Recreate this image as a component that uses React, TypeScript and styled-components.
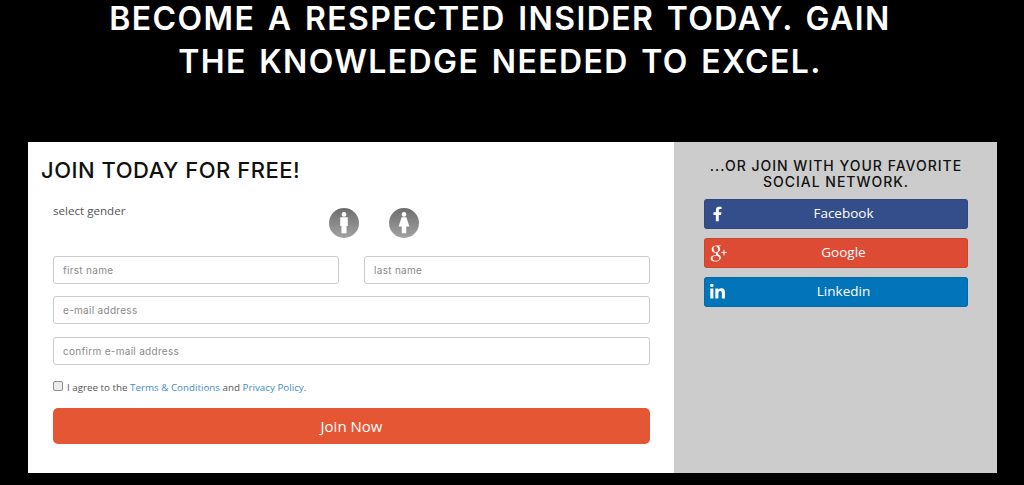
import styled, { createGlobalStyle } from 'styled-components';
import { FaFacebookF, FaLinkedinIn } from 'react-icons/fa';
import { TiSocialGooglePlus } from 'react-icons/ti';

const GlobalStyle = createGlobalStyle`
  html, body {
    margin: 0;
    height: 100%;
    background: #000;
    overflow: hidden;
  }
  * {
    box-sizing: border-box;
  }
`;

const Page = styled.div`
  width: 1024px;
  height: 485px;
  background: #000;
  display: flex;
  flex-direction: column;
`;

const Headline = styled.h1`
  width: 1000px;
  height: 145px;
  margin: -3px 0 0;
  text-align: center;
  color: #fff;
  font-family: Inter, sans-serif;
  font-size: 32px;
  font-weight: 600;
  line-height: 43px;
  letter-spacing: 1.4px;
  word-spacing: 3px;
  text-transform: uppercase;
`;

const Panel = styled.div`
  width: 969px;
  height: 331px;
  margin-left: 28px;
  display: flex;
`;

const FormSide = styled.div`
  width: 646px;
  background: #fff;
  padding: 15px 24px 0 13px;
`;

const FormTitle = styled.h2`
  margin: 0;
  color: #111;
  font-family: Inter, sans-serif;
  font-size: 22px;
  font-weight: 500;
  line-height: 27px;
  letter-spacing: 0.5px;
  text-transform: uppercase;
`;

const FormBody = styled.div`
  padding-left: 12px;
`;

const GenderRow = styled.div`
  display: flex;
  height: 72px;
  padding-top: 19px;
`;

const GenderLabel = styled.div`
  width: 276px;
  color: #555;
  font-family: "Open Sans", sans-serif;
  font-size: 11.6px;
  line-height: 16px;
`;

const GenderIcons = styled.div`
  display: flex;
  gap: 30px;
  padding-top: 5px;
`;

const GenderBadge = styled.svg`
  width: 30px;
  height: 30px;
  display: block;
`;

const NameRow = styled.div`
  display: flex;
  gap: 25px;
`;

const Field = styled.input`
  display: block;
  flex: 1;
  width: 100%;
  min-width: 0;
  height: 28px;
  border: 1px solid #ccc;
  border-radius: 3px;
  padding: 0 9px;
  background: #fff;
  font-family: Inter, sans-serif;
  font-size: 10px;
  letter-spacing: 0.3px;
  outline: none;

  &::placeholder {
    color: #8a8a8a;
    opacity: 1;
  }
`;

const EmailField = styled(Field)`
  margin-top: 12px;
`;

const ConfirmField = styled(Field)`
  margin-top: 13px;
`;

const AgreeRow = styled.label`
  display: flex;
  align-items: center;
  height: 17px;
  margin-top: 14px;
  color: #555;
  font-family: "Open Sans", sans-serif;
  font-size: 9.8px;
`;

const AgreeBox = styled.input`
  appearance: none;
  width: 10px;
  height: 10px;
  margin: 0 4px 4px 0;
  border: 1px solid #8f8f8f;
  border-radius: 2px;
  background: #ececec;
`;

const AgreeLink = styled.a`
  color: #428bca;
  text-decoration: none;
`;

const JoinButton = styled.button`
  display: block;
  width: 100%;
  height: 36px;
  margin-top: 12px;
  border: 0;
  border-radius: 5px;
  background: #e55635;
  color: #fff;
  font-family: "Open Sans", sans-serif;
  font-size: 15px;
`;

const SocialSide = styled.div`
  flex: 1;
  background: #ccc;
  padding: 16px 29px 0 30px;
`;

const SocialTitle = styled.h3`
  margin: 0 0 9px;
  color: #111;
  font-family: Inter, sans-serif;
  font-size: 14px;
  font-weight: 500;
  line-height: 16px;
  letter-spacing: 1px;
  text-align: center;
  text-transform: uppercase;
`;

const SocialList = styled.div`
  display: flex;
  flex-direction: column;
  gap: 9px;
`;

const SocialButton = styled.button<{ $bg: string }>`
  position: relative;
  display: block;
  width: 100%;
  height: 30px;
  border: 1px solid rgba(0, 0, 0, 0.08);
  border-radius: 3px;
  background: ${p => p.$bg};
  color: #fff;
  font-family: "Open Sans", sans-serif;
  font-size: 13.5px;
  line-height: 25px;
  padding: 0 0 2px 15px;
  text-align: center;
`;

const SocialIcon = styled.span<{ $left: number; $size: number }>`
  position: absolute;
  left: ${p => p.$left}px;
  top: 50%;
  transform: translateY(-50%);
  display: flex;
  font-size: ${p => p.$size}px;
`;

function MaleIcon() {
  return (
    <GenderBadge viewBox="0 0 31 31">
      <defs>
        <linearGradient id="maleFill" x1="0" y1="0" x2="0" y2="1">
          <stop offset="0" stopColor="#6e6e6e" />
          <stop offset="1" stopColor="#a2a2a2" />
        </linearGradient>
      </defs>
      <circle cx="15.5" cy="15.5" r="15.5" fill="url(#maleFill)" />
      <circle cx="15.5" cy="6.6" r="2.4" fill="#fff" />
      <path d="M11.6 9.6h7.8v9h-1.3V26h-5.2v-7.4h-1.3z" fill="#fff" />
    </GenderBadge>
  );
}

function FemaleIcon() {
  return (
    <GenderBadge viewBox="0 0 31 31">
      <defs>
        <linearGradient id="femaleFill" x1="0" y1="0" x2="0" y2="1">
          <stop offset="0" stopColor="#6e6e6e" />
          <stop offset="1" stopColor="#a2a2a2" />
        </linearGradient>
      </defs>
      <circle cx="15.5" cy="15.5" r="15.5" fill="url(#femaleFill)" />
      <circle cx="15.5" cy="6.6" r="2.4" fill="#fff" />
      <path d="M13 9.6h5l3 9.4h-3.2v7h-4.6v-7H10z" fill="#fff" />
    </GenderBadge>
  );
}

export default function App() {
  return (
    <Page>
      <GlobalStyle />
      <Headline>
        Become a respected insider today. Gain
        <br />
        the knowledge needed to excel.
      </Headline>
      <Panel>
        <FormSide>
          <FormTitle>Join today for free!</FormTitle>
          <FormBody>
            <GenderRow>
              <GenderLabel>select gender</GenderLabel>
              <GenderIcons>
                <MaleIcon />
                <FemaleIcon />
              </GenderIcons>
            </GenderRow>
            <NameRow>
              <Field placeholder="first name" />
              <Field placeholder="last name" />
            </NameRow>
            <EmailField placeholder="e-mail address" />
            <ConfirmField placeholder="confirm e-mail address" />
            <AgreeRow>
              <AgreeBox type="checkbox" />
              <span>
                I agree to the <AgreeLink>Terms &amp; Conditions</AgreeLink> and{' '}
                <AgreeLink>Privacy Policy</AgreeLink>.
              </span>
            </AgreeRow>
            <JoinButton>Join Now</JoinButton>
          </FormBody>
        </FormSide>
        <SocialSide>
          <SocialTitle>
            ...or join with your favorite
            <br />
            social network.
          </SocialTitle>
          <SocialList>
            <SocialButton $bg="#344e8c">
              <SocialIcon $left={5} $size={15}><FaFacebookF /></SocialIcon>
              Facebook
            </SocialButton>
            <SocialButton $bg="#dd4b34">
              <SocialIcon $left={0} $size={26}><TiSocialGooglePlus /></SocialIcon>
              Google
            </SocialButton>
            <SocialButton $bg="#0274b9">
              <SocialIcon $left={4} $size={17}><FaLinkedinIn /></SocialIcon>
              Linkedin
            </SocialButton>
          </SocialList>
        </SocialSide>
      </Panel>
    </Page>
  );
}
